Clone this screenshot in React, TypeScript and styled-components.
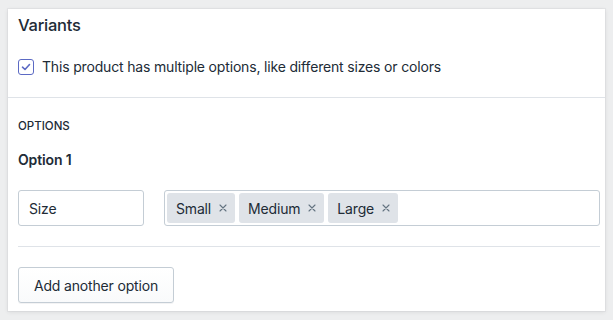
import React from "react";
import styled, { createGlobalStyle } from "styled-components";

const GlobalStyle = createGlobalStyle`
  html, body {
    margin: 0;
    padding: 0;
    background: #edeeef;
    font-family: Inter, "Noto Sans", "Liberation Sans", sans-serif;
    color: #212b36;
    -webkit-font-smoothing: antialiased;
  }
  * { box-sizing: border-box; }
`;

const Page = styled.div`
  width: 613px;
  height: 320px;
  padding: 9px 8px 9px 8px;
`;

const Card = styled.div`
  width: 597px;
  height: 302px;
  background: #fff;
  box-shadow: 0 0 0 1px rgba(63, 63, 68, 0.04), 0 1px 4px 0 rgba(63, 63, 68, 0.12);
  display: flex;
  flex-direction: column;
`;

const Section = styled.div<{ $top: number; $bottom: number }>`
  padding: ${(p) => p.$top}px 5px ${(p) => p.$bottom}px 10px;
  display: flex;
  flex-direction: column;
`;

const Heading = styled.h2`
  margin: 0 0 20px;
  font-size: 16.5px;
  line-height: 24px;
  font-weight: 500;
  letter-spacing: -0.25px;
`;

const CheckRow = styled.label`
  display: flex;
  align-items: center;
  gap: 8px;
  height: 20px;
  font-size: 14px;
  line-height: 20px;
  letter-spacing: -0.17px;
`;

const Box = styled.span`
  width: 16px;
  height: 16px;
  border: 1px solid #5c6ac4;
  border-radius: 3px;
  display: flex;
  align-items: center;
  justify-content: center;
  background: #fff;
`;

const Divider = styled.div<{ $inset?: boolean }>`
  height: 1px;
  background: #dfe3e8;
  margin: ${(p) => (p.$inset ? "20px 0" : "0")};
`;

const Subheading = styled.h3`
  margin: 0 0 16px;
  font-size: 11.5px;
  line-height: 16px;
  font-weight: 500;
  text-transform: uppercase;
  letter-spacing: 0;
`;

const Label = styled.div`
  font-size: 14px;
  line-height: 20px;
  font-weight: 600;
  letter-spacing: -0.15px;
  margin-bottom: 20px;
`;

const FieldRow = styled.div`
  display: flex;
  gap: 20px;
`;

const TextField = styled.div`
  width: 126px;
  height: 36px;
  border: 1px solid #c4cdd5;
  border-radius: 3px;
  padding: 0 10px;
  display: flex;
  align-items: center;
  font-size: 14px;
  letter-spacing: -0.15px;
`;

const TagField = styled.div`
  flex: 1;
  height: 36px;
  border: 1px solid #c4cdd5;
  border-radius: 3px;
  padding: 2px;
  display: flex;
  gap: 4px;
`;

const Tag = styled.span`
  height: 30px;
  background: #dfe3e8;
  border-radius: 3px;
  padding: 0 8px 0 9px;
  display: flex;
  align-items: center;
  gap: 8px;
  font-size: 14px;
  letter-spacing: -0.17px;
  color: #212b36;
`;

const Button = styled.button`
  align-self: flex-start;
  height: 36px;
  width: 156px;
  padding: 0;
  border: 1px solid #c4cdd5;
  border-radius: 3px;
  background: linear-gradient(180deg, #fff, #f9fafb);
  box-shadow: 0 1px 0 0 rgba(22, 29, 37, 0.05);
  font-family: inherit;
  font-size: 14px;
  letter-spacing: -0.17px;
  color: #212b36;
`;

const Check = () => (
  <svg width="10" height="10" viewBox="0 0 10 10">
    <path d="M1.5 5.2 L4 7.5 L8.5 2.5" fill="none" stroke="#5c6ac4" strokeWidth="1.6" strokeLinecap="round" strokeLinejoin="round" />
  </svg>
);

const Cross = () => (
  <svg width="8" height="8" viewBox="0 0 8 8">
    <path d="M1 1 L7 7 M7 1 L1 7" stroke="#637381" strokeWidth="1.1" strokeLinecap="round" />
  </svg>
);

const values = ["Small", "Medium", "Large"];

export default function App() {
  return (
    <>
      <GlobalStyle />
      <Page>
        <Card>
          <Section $top={4} $bottom={20}>
            <Heading>Variants</Heading>
            <CheckRow>
              <Box>
                <Check />
              </Box>
              This product has multiple options, like different sizes or colors
            </CheckRow>
          </Section>
          <Divider />
          <Section $top={20} $bottom={8}>
            <Subheading>Options</Subheading>
            <Label>Option 1</Label>
            <FieldRow>
              <TextField>Size</TextField>
              <TagField>
                {values.map((v) => (
                  <Tag key={v}>
                    {v}
                    <Cross />
                  </Tag>
                ))}
              </TagField>
            </FieldRow>
            <Divider $inset />
            <Button>Add another option</Button>
          </Section>
        </Card>
      </Page>
    </>
  );
}
